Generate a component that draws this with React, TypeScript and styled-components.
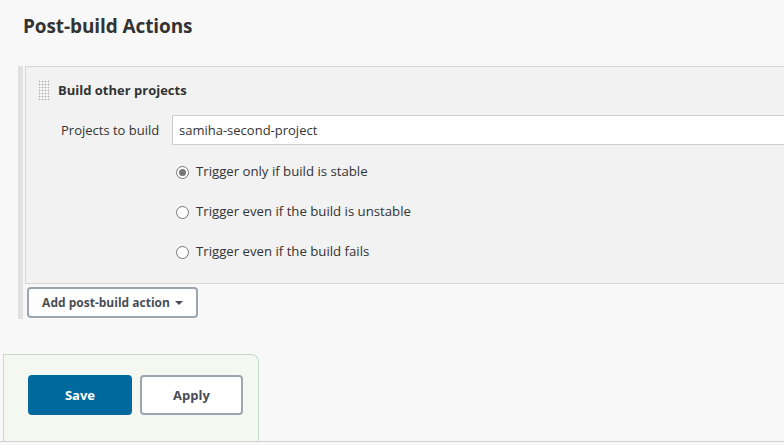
import styled, { createGlobalStyle } from "styled-components";

const GlobalStyle = createGlobalStyle`
  html, body {
    margin: 0;
    padding: 0;
    background: #f8f8f8;
    font-family: "Open Sans", "Noto Sans", "Liberation Sans", sans-serif;
    color: #333;
  }
  body {
    height: 445px;
    overflow: hidden;
  }
`;

const Page = styled.div`
  width: 784px;
  height: 441px;
  border-bottom: 1px solid #d0d0d0;
  display: flex;
  flex-direction: column;
  overflow: hidden;
`;

const Heading = styled.h2`
  margin: 13px 0 0 23px;
  font-size: 19px;
  font-weight: 700;
  line-height: 27px;
  color: #333;
  letter-spacing: -0.1px;
`;

const Section = styled.div`
  margin: 26px 0 0 18px;
  border-left: 5px solid #e0e0e0;
  height: 253px;
  box-sizing: border-box;
`;

const Panel = styled.div`
  margin-left: 2px;
  height: 218px;
  box-sizing: border-box;
  background: #f2f2f2;
  border: 1px solid #d6d6d6;
  border-right: none;
  padding: 12px 0 0 12px;
`;

const PanelHeader = styled.div`
  display: flex;
  align-items: center;
  gap: 8px;
  height: 22px;
`;

const Handle = styled.div`
  width: 12px;
  height: 21px;
  background-color: #fafafa;
  background-image: radial-gradient(circle, #b8b8b8 0.9px, transparent 1.1px);
  background-size: 3px 3px;
`;

const PanelTitle = styled.span`
  font-size: 13px;
  font-weight: 700;
  color: #333;
`;

const FormRow = styled.div`
  display: flex;
  align-items: center;
  margin-top: 14px;
  height: 30px;
`;

const Label = styled.label`
  width: 134px;
  box-sizing: border-box;
  padding-left: 23px;
  font-size: 13px;
  color: #333;
`;

const TextInput = styled.input`
  flex: 1;
  height: 30px;
  box-sizing: border-box;
  border: 1px solid #ccc;
  border-right: none;
  background: #fff;
  padding: 0 6px;
  font-family: inherit;
  font-size: 13px;
  color: #333;
  outline: none;
`;

const RadioList = styled.div`
  display: flex;
  flex-direction: column;
  margin: 15px 0 0 138px;
  gap: 19px;
`;

const RadioRow = styled.label`
  display: flex;
  align-items: center;
  gap: 7px;
  height: 21px;
  font-size: 13.2px;
  color: #333;
`;

const RadioDot = styled.span<{ $checked?: boolean }>`
  width: 11px;
  height: 11px;
  border-radius: 50%;
  border: 1px solid #767676;
  background: #fff;
  margin-top: 3px;
  position: relative;
  &::after {
    content: "";
    display: ${(p) => (p.$checked ? "block" : "none")};
    position: absolute;
    left: 2px;
    top: 2px;
    width: 7px;
    height: 7px;
    border-radius: 50%;
    background: #767676;
  }
`;

const AddButton = styled.button`
  margin: 3px 0 0 4px;
  width: 171px;
  height: 31px;
  box-sizing: border-box;
  border: 2px solid #9ba6b0;
  border-radius: 4px;
  background: #fff;
  font-family: inherit;
  font-size: 12px;
  font-weight: 700;
  color: #4a4d55;
  display: flex;
  align-items: center;
  justify-content: center;
  gap: 5px;
  padding: 0;
`;

const Caret = styled.span`
  width: 0;
  height: 0;
  border-left: 4px solid transparent;
  border-right: 4px solid transparent;
  border-top: 4px solid #4a4d55;
`;

const SaveBar = styled.div`
  margin: 35px 0 0 3px;
  width: 256px;
  flex: 1;
  box-sizing: border-box;
  background: #f5f7f1;
  border: 1px solid #c4dccb;
  border-bottom: none;
  border-top-right-radius: 8px;
  display: flex;
  gap: 8px;
  padding: 20px 0 0 24px;
`;

const ActionButton = styled.button<{ $primary?: boolean }>`
  width: ${(p) => (p.$primary ? "104px" : "103px")};
  height: 40px;
  box-sizing: border-box;
  border-radius: 4px;
  border: 2px solid ${(p) => (p.$primary ? "#006a9e" : "#9ba6b0")};
  background: ${(p) => (p.$primary ? "#006a9e" : "#fff")};
  color: ${(p) => (p.$primary ? "#fff" : "#4a4d55")};
  font-family: inherit;
  font-size: 13px;
  font-weight: 700;
  padding: 0;
`;

export default function App() {
  return (
    <>
      <GlobalStyle />
      <Page>
        <Heading>Post-build Actions</Heading>
        <Section>
          <Panel>
            <PanelHeader>
              <Handle />
              <PanelTitle>Build other projects</PanelTitle>
            </PanelHeader>
            <FormRow>
              <Label>Projects to build</Label>
              <TextInput defaultValue="samiha-second-project" />
            </FormRow>
            <RadioList>
              <RadioRow>
                <RadioDot $checked />
                Trigger only if build is stable
              </RadioRow>
              <RadioRow>
                <RadioDot />
                Trigger even if the build is unstable
              </RadioRow>
              <RadioRow>
                <RadioDot />
                Trigger even if the build fails
              </RadioRow>
            </RadioList>
          </Panel>
          <AddButton>
            Add post-build action <Caret />
          </AddButton>
        </Section>
        <SaveBar>
          <ActionButton $primary>Save</ActionButton>
          <ActionButton>Apply</ActionButton>
        </SaveBar>
      </Page>
    </>
  );
}
